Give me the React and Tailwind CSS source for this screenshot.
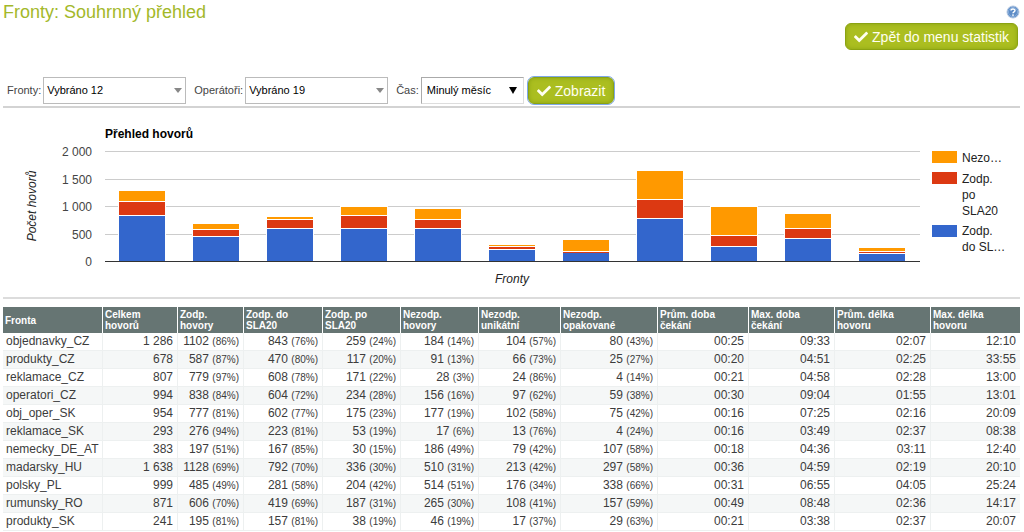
import { FaCheck } from "react-icons/fa"

const columns = [
  { label: ["Fronta"], width: "w-[99px]" },
  { label: ["Celkem", "hovorů"], width: "w-[75px]" },
  { label: ["Zodp.", "hovory"], width: "w-[66px]" },
  { label: ["Zodp. do", "SLA20"], width: "w-[79px]" },
  { label: ["Zodp. po", "SLA20"], width: "w-[78px]" },
  { label: ["Nezodp.", "hovory"], width: "w-[78px]" },
  { label: ["Nezodp.", "unikátní"], width: "w-[82px]" },
  { label: ["Nezodp.", "opakované"], width: "w-[97px]" },
  { label: ["Prům. doba", "čekání"], width: "w-[91px]" },
  { label: ["Max. doba", "čekání"], width: "w-[86px]" },
  { label: ["Prům. délka", "hovoru"], width: "w-[96px]" },
  { label: ["Max. délka", "hovoru"], width: "w-[90px]" },
]

// name, total, then [count, percent] pairs, then times
const queues = [
  ["objednavky_CZ", "1 286", [1102, 86], [843, 76], [259, 24], [184, 14], [104, 57], [80, 43], "00:25", "09:33", "02:07", "12:10"],
  ["produkty_CZ", "678", [587, 87], [470, 80], [117, 20], [91, 13], [66, 73], [25, 27], "00:20", "04:51", "02:25", "33:55"],
  ["reklamace_CZ", "807", [779, 97], [608, 78], [171, 22], [28, 3], [24, 86], [4, 14], "00:21", "04:58", "02:28", "13:00"],
  ["operatori_CZ", "994", [838, 84], [604, 72], [234, 28], [156, 16], [97, 62], [59, 38], "00:30", "09:04", "01:55", "13:01"],
  ["obj_oper_SK", "954", [777, 81], [602, 77], [175, 23], [177, 19], [102, 58], [75, 42], "00:16", "07:25", "02:16", "20:09"],
  ["reklamace_SK", "293", [276, 94], [223, 81], [53, 19], [17, 6], [13, 76], [4, 24], "00:16", "03:49", "02:37", "08:38"],
  ["nemecky_DE_AT", "383", [197, 51], [167, 85], [30, 15], [186, 49], [79, 42], [107, 58], "00:18", "04:36", "03:11", "12:40"],
  ["madarsky_HU", "1 638", [1128, 69], [792, 70], [336, 30], [510, 31], [213, 42], [297, 58], "00:36", "04:59", "02:19", "20:10"],
  ["polsky_PL", "999", [485, 49], [281, 58], [204, 42], [514, 51], [176, 34], [338, 66], "00:31", "06:55", "04:05", "25:24"],
  ["rumunsky_RO", "871", [606, 70], [419, 69], [187, 31], [265, 30], [108, 41], [157, 59], "00:49", "08:48", "02:36", "14:17"],
  ["produkty_SK", "241", [195, 81], [157, 81], [38, 19], [46, 19], [17, 37], [29, 63], "00:21", "03:38", "02:37", "20:07"],
]

const BLUE = "#3366cc"
const RED = "#dc3912"
const ORANGE = "#ff9900"

function GreenButton({ children, focused }) {
  return (
    <button
      type="button"
      className={`flex h-[27px] items-center gap-1 rounded-md border border-[#8ba312] bg-[#abbe20] px-2 text-sm text-[#fffff0] shadow-[inset_0_0_4px_#8ba312] ${focused ? "outline-1 outline-[#7fa8e8]" : ""}`}
    >
      <FaCheck className="size-3.5" />
      {children}
    </button>
  )
}

function Filter({ id, label, value, width, dark }) {
  return (
    <div className="flex items-center gap-0.5">
      <label htmlFor={id} className="text-[#444]">{label}</label>
      <div className={`relative ${width}`}>
        <select
          id={id}
          className={`h-[27px] w-full appearance-none border bg-white text-black ${dark ? "border-[#ddd] border-t-[#aaa] border-l-[#aaa] pl-[5px]" : "border-[#bbb] pl-[3px]"}`}
        >
          <option>{value}</option>
        </select>
        <svg
          viewBox="0 0 8 7"
          className={`pointer-events-none absolute ${dark ? "top-[10px] right-[7px] h-[7px] w-2 text-black" : "top-[11px] right-1 h-[5px] w-2 text-[#888]"}`}
          preserveAspectRatio="none"
        >
          <path d="M0 0h8L4 7z" fill="currentColor" />
        </svg>
      </div>
    </div>
  )
}

function HelpIcon() {
  return (
    <svg viewBox="0 0 14 14" className="size-3.5">
      <circle cx="7" cy="7" r="6" fill="#5d8cc6" stroke="#b5c9e3" />
      <circle cx="7" cy="7" r="4.6" fill="none" stroke="#8fb2dd" strokeWidth=".8" />
      <path d="M5 5.6C5 3.4 9 3.4 9 5.5 9 6.9 7 6.8 7 8.2" fill="none" stroke="#fff" strokeWidth="1.4" />
      <circle cx="7" cy="10.1" r=".9" fill="#fff" />
    </svg>
  )
}

function CallsChart() {
  const left = 102
  const right = 917
  const base = 153
  const step = (right - left) / queues.length
  const y = (value) => Math.ceil(base - (value * 110) / 2000)

  return (
    <svg viewBox="0 0 1017 189" className="block w-full text-[12px]" role="img" aria-label="Přehled hovorů">
      <text x={left} y="30" className="text-[12px] font-bold">Přehled hovorů</text>
      {[2000, 1500, 1000, 500, 0].map((tick) => (
        <g key={tick}>
          <rect x={left} y={y(tick)} width={right - left} height="1" fill="#ccc" />
          <text x="89" y={y(tick) + 5} textAnchor="end" fill="#444">
            {tick >= 1000 ? `${tick / 1000 | 0} ${String(tick % 1000).padStart(3, "0")}` : tick}
          </text>
        </g>
      ))}

      {queues.map((queue, i) => {
        const x = Math.floor(left + i * step + 14)
        const sla = queue[3][0]
        const late = sla + queue[4][0]
        const total = late + queue[5][0]
        // every segment leaves a one pixel gap above the one below it
        return (
          <g key={queue[0]}>
            <rect x={x - 1} y={y(total) - 1} width="48" height={base - y(total) + 1} fill="#fff" />
            <rect x={x} y={y(total)} width="46" height={Math.max(1, y(late) - y(total))} fill={ORANGE} />
            <rect x={x} y={y(late) + 1} width="46" height={Math.max(1, y(sla) - y(late) - 1)} fill={RED} />
            <rect x={x} y={y(sla) + 1} width="46" height={base - y(sla) - 1} fill={BLUE} />
          </g>
        )
      })}
      <rect x={left} y={base} width={right - left} height="1" fill="#333" />

      <text x="509" y="175" textAnchor="middle" fontStyle="italic" fill="#222">Fronty</text>
      <text transform="translate(33 98) rotate(-90)" textAnchor="middle" fontStyle="italic" fill="#222">Počet hovorů</text>

      <rect x="929" y="43" width="25" height="12" fill={ORANGE} />
      <rect x="929" y="64" width="25" height="12" fill={RED} />
      <rect x="929" y="117" width="25" height="12" fill={BLUE} />
      <g fill="#222">
        <text x="959" y="54">Nezo…</text>
        <text x="959" y="75">Zodp.</text>
        <text x="959" y="91">po</text>
        <text x="959" y="107">SLA20</text>
        <text x="959" y="127">Zodp.</text>
        <text x="959" y="143">do SL…</text>
      </g>
    </svg>
  )
}

function QueueTable() {
  return (
    <table className="mt-2 w-full table-fixed border-separate border-spacing-0 text-[12px] text-[#3c3c3c]">
      <thead>
        <tr className="h-[26px] bg-[#667573] text-left text-[10px] leading-[11px] text-white">
          {columns.map((column, i) => (
            <th key={i} className={`${column.width} border-l border-white p-0 pl-[2px] align-middle first:border-l-0`}>
              {column.label.map((line) => <div key={line}>{line}</div>)}
            </th>
          ))}
        </tr>
      </thead>
      <tbody>
        {queues.map((queue) => (
          <tr key={queue[0]} className="h-[18px] leading-[17px] even:bg-[#f5f7f7]">
            {queue.map((cell, i) => (
              <td
                key={i}
                className="border-b border-l border-[#edf0f0] p-0 pr-1 text-right whitespace-nowrap first:border-l-0 first:pr-0 first:pl-[3px] first:text-left"
              >
                {Array.isArray(cell) ? <>{cell[0]} <span className="text-[10px]">({cell[1]}%)</span></> : cell}
              </td>
            ))}
          </tr>
        ))}
      </tbody>
    </table>
  )
}

export default function App() {
  return (
    <div className="bg-white pr-1 pl-[3px] font-['Liberation_Sans',Arial,sans-serif]">
      <header className="flex justify-between">
        <h1 className="text-lg leading-6 text-[#a3b82a]">Fronty: Souhrnný přehled</h1>
        <div className="flex flex-col items-end gap-1 pt-[5px]">
          <a href="#help" aria-label="Nápověda"><HelpIcon /></a>
          <div className="pr-0.5">
            <GreenButton>Zpět do menu statistik</GreenButton>
          </div>
        </div>
      </header>

      <form className="mt-[27px] flex items-center gap-2 border-b-2 border-[#d3d3d3] pb-[2px] pl-1 text-[11px]">
        <Filter id="queues" label="Fronty:" value="Vybráno 12" width="w-[143px]" />
        <Filter id="agents" label="Operátoři:" value="Vybráno 19" width="w-[143px]" />
        <div className="flex items-center gap-1">
          <Filter id="period" label="Čas:" value="Minulý měsíc" width="w-[103px]" dark />
          <GreenButton focused>Zobrazit</GreenButton>
        </div>
      </form>

      <div className="border-b-2 border-[#dcdcdc]">
        <CallsChart />
      </div>

      <QueueTable />
    </div>
  )
}
